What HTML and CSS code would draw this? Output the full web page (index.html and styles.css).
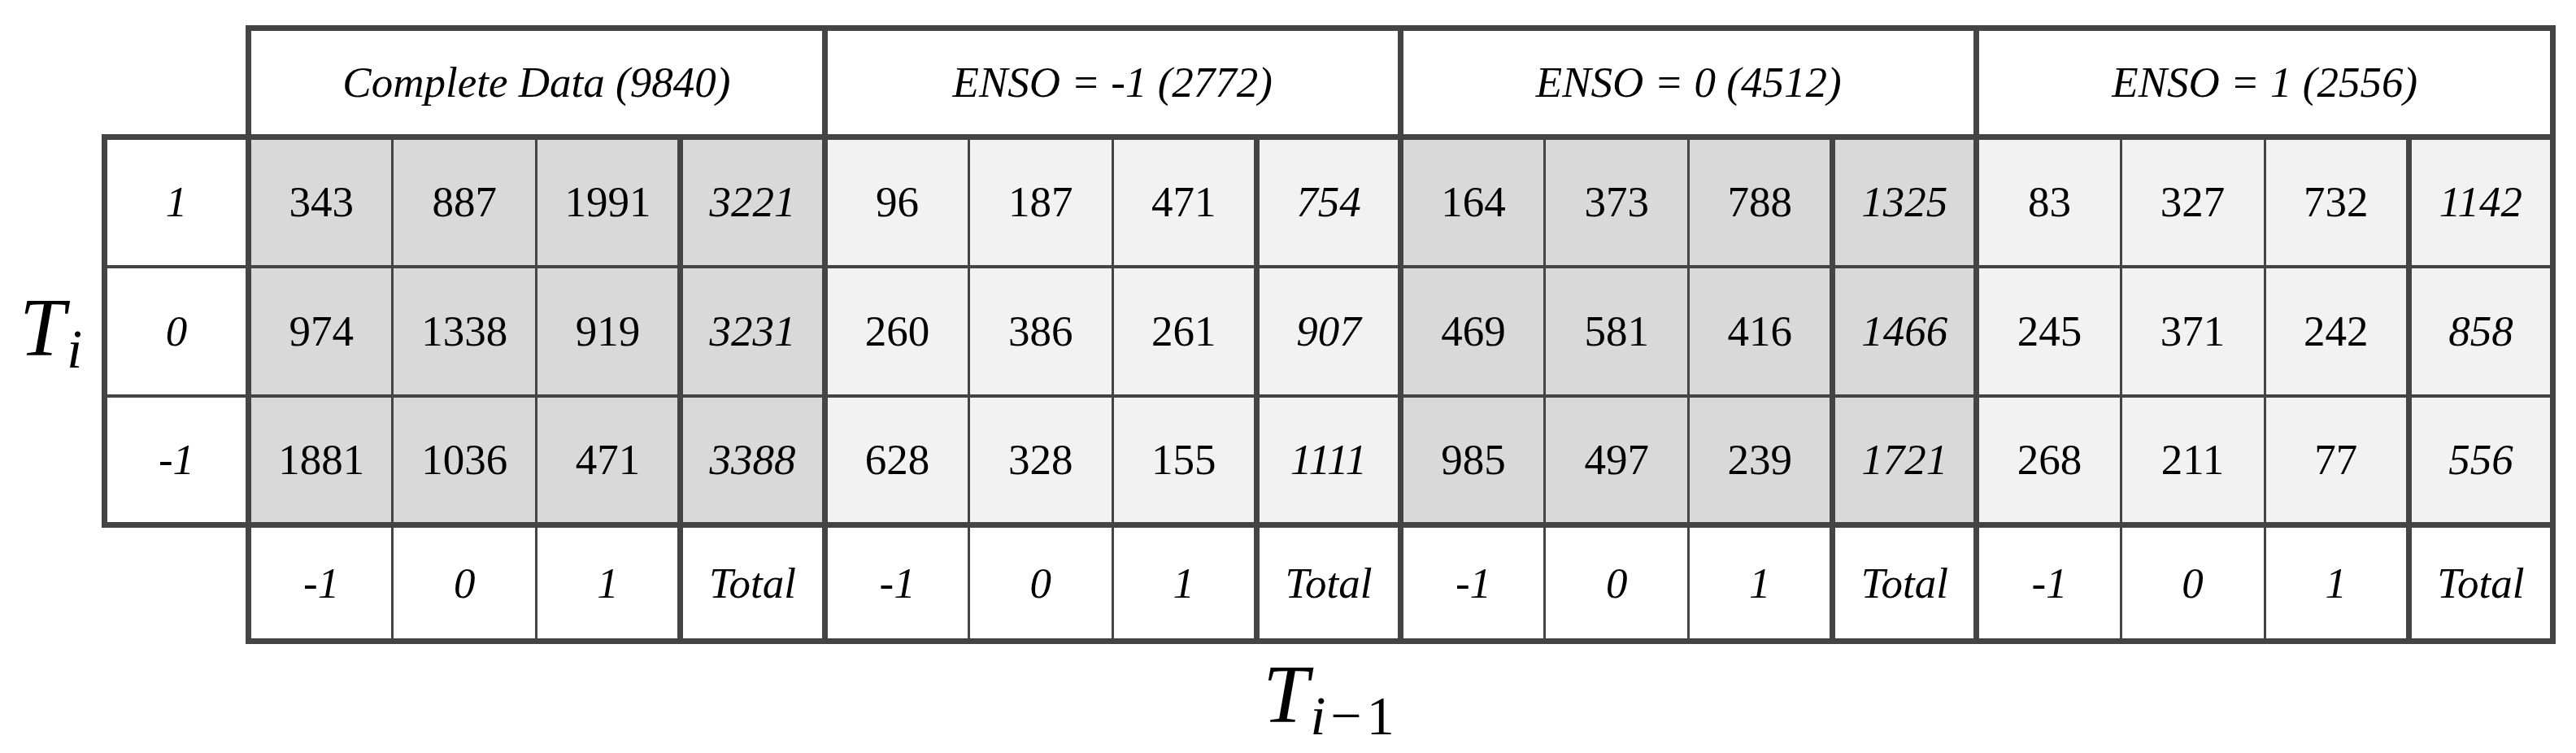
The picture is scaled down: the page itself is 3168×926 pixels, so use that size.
FILE: index.html
```html
<!DOCTYPE html>
<html lang="en">
<head>
    <meta charset="UTF-8">
    <meta name="viewport" content="width=device-width, initial-scale=1.0">
    <title>ENSO transition counts</title>
    <link rel="stylesheet" href="styles.css">
</head>
<body>

<div class="figure">

    <!-- y axis -->
    <div class="y-axis">
        <span class="math"><var>T</var><sub><var>i</var></sub></span>
    </div>

    <div class="plot">
        <table class="counts">
            <thead>
                <tr>
                    <td class="corner"></td>
                    <th colspan="4" class="group">Complete Data (9840)</th>
                    <th colspan="4" class="group">ENSO = -1 (2772)</th>
                    <th colspan="4" class="group">ENSO = 0 (4512)</th>
                    <th colspan="4" class="group">ENSO = 1 (2556)</th>
                </tr>
            </thead>
            <tbody>
                <tr>
                    <th class="row-label">1</th>
                    <td>343</td><td>887</td><td>1991</td><td class="total">3221</td>
                    <td>96</td><td>187</td><td>471</td><td class="total">754</td>
                    <td>164</td><td>373</td><td>788</td><td class="total">1325</td>
                    <td>83</td><td>327</td><td>732</td><td class="total">1142</td>
                </tr>
                <tr>
                    <th class="row-label">0</th>
                    <td>974</td><td>1338</td><td>919</td><td class="total">3231</td>
                    <td>260</td><td>386</td><td>261</td><td class="total">907</td>
                    <td>469</td><td>581</td><td>416</td><td class="total">1466</td>
                    <td>245</td><td>371</td><td>242</td><td class="total">858</td>
                </tr>
                <tr>
                    <th class="row-label">-1</th>
                    <td>1881</td><td>1036</td><td>471</td><td class="total">3388</td>
                    <td>628</td><td>328</td><td>155</td><td class="total">1111</td>
                    <td>985</td><td>497</td><td>239</td><td class="total">1721</td>
                    <td>268</td><td>211</td><td>77</td><td class="total">556</td>
                </tr>
            </tbody>
            <tfoot>
                <tr>
                    <td class="corner"></td>
                    <th>-1</th><th>0</th><th>1</th><th class="total">Total</th>
                    <th>-1</th><th>0</th><th>1</th><th class="total">Total</th>
                    <th>-1</th><th>0</th><th>1</th><th class="total">Total</th>
                    <th>-1</th><th>0</th><th>1</th><th class="total">Total</th>
                </tr>
            </tfoot>
        </table>

        <!-- x axis -->
        <div class="x-axis">
            <span class="math"><var>T</var><sub><var>i</var><span class="op">−</span>1</sub></span>
        </div>
    </div>

</div>

</body>
</html>
```

FILE: styles.css
```css
* {
    margin: 0;
    padding: 0;
    box-sizing: border-box;
}

body {
    background-color: #ffffff;
    color: #000000;
    font-family: 'Liberation Serif', 'Times New Roman', serif;
}

.figure {
    display: flex;
    padding-top: 31px;
}

/* axis labels */
.math {
    font-family: 'Liberation Serif', serif;
    font-size: 101px;
    line-height: 1;
    white-space: nowrap;
}

.math var {
    font-style: italic;
}

.math sub {
    font-size: 68px;
    vertical-align: -15px;
    line-height: 1;
    margin-left: 2px;
}

.math .op {
    padding: 0 6px;
}

.y-axis {
    width: 125px;
    height: 612px;
    padding-top: 141px;
    display: flex;
    align-items: center;
    justify-content: center;
}

.plot {
    display: flex;
    flex-direction: column;
}

.x-axis {
    margin-top: 12px;
    text-align: center;
}

/* the table */
.counts {
    width: 3018px;
    border-collapse: collapse;
    table-layout: fixed;
    font-size: 53px;
    line-height: 1;
}

.counts th,
.counts td {
    border: 3px solid #444444;
    text-align: center;
    vertical-align: middle;
    font-weight: normal;
}

.counts th {
    font-style: italic;
}

.counts .corner {
    border: none;
    background: none;
}

.counts thead tr {
    height: 134px;
}

.counts thead .group {
    border-width: 7px;
    background-color: #ffffff;
}

.counts tbody tr {
    height: 159px;
}

.counts tbody td,
.counts tbody th {
    border-top-width: 4px;
    border-bottom-width: 4px;
}

.counts tbody tr:first-child > * {
    border-top-width: 7px;
}

.counts tbody tr:last-child > * {
    border-bottom-width: 7px;
}

.counts .row-label {
    border-left-width: 7px;
    border-right-width: 7px;
    background-color: #ffffff;
}

/* shading per group */
.counts tbody td {
    background-color: #f2f2f2;
}

.counts tbody td:nth-child(-n+5),
.counts tbody td:nth-child(n+10):nth-child(-n+13) {
    background-color: #d9d9d9;
}

.counts .total {
    font-style: italic;
    border-left-width: 7px;
    border-right-width: 7px;
}

.counts tfoot tr {
    height: 143px;
}

.counts tfoot th {
    border-top-width: 7px;
    border-bottom-width: 7px;
    background-color: #ffffff;
}

.counts tfoot th:nth-child(2) {
    border-left-width: 7px;
}
```
